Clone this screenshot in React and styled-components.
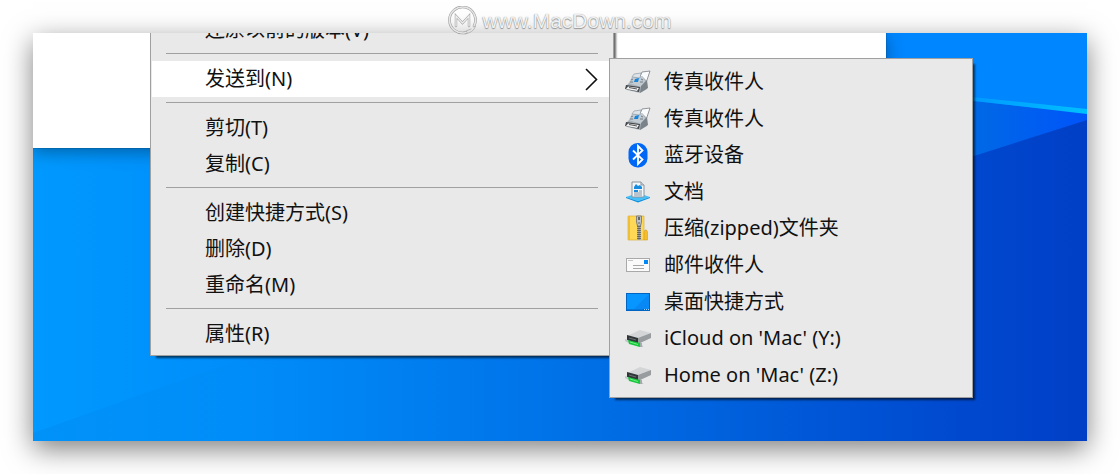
import React from 'react';
import styled, { createGlobalStyle } from 'styled-components';

const GlobalStyle = createGlobalStyle`
  * {
    box-sizing: border-box;
  }

  body {
    margin: 0;
    background: #fff;
    font-family: "Noto Sans", "Noto Sans CJK SC", sans-serif;
  }
`;

const Page = styled.div`
  display: flex;
  flex-direction: column;
  min-height: 100vh;
  padding: 0 33px 33px;
`;

const Watermark = styled.header`
  position: relative;
  z-index: 2;
  display: flex;
  justify-content: center;
  align-items: center;
  gap: 5px;
  height: 33px;
  padding-top: 8px;
`;

const WatermarkText = styled.span`
  font: 21px/28px "Liberation Sans", Arial, sans-serif;
  color: #f0f0f0;
  text-shadow: 0 0 1px #888, 0 1px 1px #999;
`;

const Frame = styled.div`
  display: flex;
  flex: 1;
  flex-direction: column;
  box-shadow: 0 8px 26px rgba(0, 0, 0, 0.5);
`;

const Desktop = styled.main`
  position: relative;
  flex: 1;
  overflow: hidden;
  background: #0078ea;
`;

const Wallpaper = styled.svg`
  position: absolute;
  width: 100%;
  height: 100%;
`;

const ExplorerWindow = styled.div`
  position: relative;
  height: 115px;
  margin-right: 201px;
  background: #fff;
  box-shadow: 0 0 1px rgba(0, 0, 0, 0.6), 0 4px 16px rgba(0, 0, 0, 0.35);
`;

const Menu = styled.div`
  position: absolute;
  top: ${({ $top }) => $top}px;
  left: ${({ $left }) => $left}px;
  width: ${({ $width }) => $width}px;
  min-height: ${({ $minHeight }) => $minHeight || 0}px;
  display: grid;
  padding: 3px 1px;
  border: 1px solid #a0a0a0;
  background: #e9e9e9;
  box-shadow: 4px 4px 2px -2px rgba(0, 0, 0, 0.6);
`;

const SubMenu = styled(Menu)`
  grid-auto-rows: 1fr;
  padding: 5px 1px 4px;
`;

const Item = styled.button`
  display: flex;
  align-items: center;
  min-height: 36px;
  padding: 0 14px 0 ${({ $icon }) => ($icon ? 14 : 53)}px;
  border: 0;
  background: ${({ $active }) => ($active ? '#fff' : 'transparent')};
  color: #111;
  font-family: inherit;
  font-size: 20px;
  line-height: 30px;
  text-align: left;
  white-space: nowrap;
`;

const Label = styled.span`
  flex: 1;
`;

const IconSlot = styled.span`
  display: flex;
  width: 26px;
  margin-right: 13px;
`;

const Separator = styled.hr`
  width: auto;
  height: 1px;
  margin: 5px 14px 7px;
  border: 0;
  background: #a0a0a0;
`;

const Logo = () => (
  <svg width="29" height="29" viewBox="0 0 29 29" fill="none" strokeLinecap="round">
    <path d="M18 26.500A13 13 0 1 1 26 20" stroke="#999" strokeWidth="2.6" />
    <path d="M18 26.500A13 13 0 1 1 26 20" stroke="#e6e6e6" strokeWidth="1.6" />
    <path d="M8 20V10L14.500 17L21 10V20" stroke="#999" strokeWidth="2.4" />
    <path d="M8 20V10L14.500 17L21 10V20" stroke="#ededed" strokeWidth="1.4" />
    <path d="M17 28C22 27 26 25 27.500 20M18 25L23 23" stroke="#aaa" strokeWidth=".8" />
  </svg>
);

const Chevron = () => (
  <svg width="14" height="24" viewBox="0 0 14 24" fill="none">
    <path d="M2 2L12.500 12.500L2 23" stroke="#111" strokeWidth="1.6" />
  </svg>
);

const FaxIcon = () => (
  <svg width="26" height="24" viewBox="0 0 26 24">
    <path d="M14 9L17 2L25 1L21 13Z" fill="#fafbfc" stroke="#777e85" strokeWidth=".8" />
    <path d="M4 13L7 7L17 6L22 11L22 19L15 23L2 20L1 16Z" fill="#a9b1b8" />
    <path d="M4 13L7 7L17 6L20 11L16 17Z" fill="#c3cbd2" />
    <path d="M16 16L22 10L23 18L15 23Z" fill="#7b838a" />
    <path d="M7 7L9 4L16 3L15 8Z" fill="#dce3e9" stroke="#87909a" strokeWidth=".6" />
    <path d="M10 9L14 8L13 12L9 12Z" fill="#1684d8" />
    <path d="M6 10L8 9M5 12L8 12M16 9L18 10M15 12L18 12" stroke="#6f7c88" />
    <path d="M1 15L15 17L14 22L0 19Z" fill="#43484d" />
    <path d="M3 16.500L14 18L12 21L1 19Z" fill="#f1f2f3" />
    <path d="M4 17.500L12 19" stroke="#555" />
  </svg>
);

const BluetoothIcon = () => (
  <svg width="26" height="26" viewBox="0 0 26 26">
    <rect x="3.500" y="1" width="19" height="24.500" rx="9" fill="#0068f5" />
    <path
      d="M8 8.500L17.500 17.500L13 22V4L17.500 8.500L8 17.500"
      fill="none"
      stroke="#fff"
      strokeWidth="1.8"
    />
  </svg>
);

const DocumentIcon = () => (
  <svg width="26" height="22" viewBox="0 0 26 22">
    <path d="M1 16L13 12L25 16L13 20Z" fill="#45c1fa" />
    <path d="M1 16L13 20L25 16V17L13 21.500L1 17Z" fill="#0c91df" />
    <path d="M7 1H16L19 4V16H7Z" fill="#f4f7f9" stroke="#89939b" />
    <path d="M16 1V4H19" fill="#d4dadd" stroke="#89939b" />
    <path d="M14 10H17M9 12H17M9 14H17" stroke="#7e93a3" fill="none" />
    <path d="M9 6L11 3L13 5L15 4L17 6V8H9ZM9 9H13V11H9Z" fill="#168bdf" />
  </svg>
);

const ZipIcon = () => (
  <svg width="26" height="26" viewBox="0 0 26 26">
    <path d="M3 1H19V25H3Z" fill="#ffd955" stroke="#d7a72d" strokeWidth=".6" />
    <path d="M3 1H5V25H3Z" fill="#edbd3c" />
    <path d="M19 17L20 15H21.500L22.500 17V25H19Z" fill="#f5bd2b" stroke="#d69e20" strokeWidth=".6" />
    <path d="M14 8V25" stroke="#555" strokeWidth="3.6" />
    <path d="M14 10V25" stroke="#c4c4c4" strokeWidth="3.6" strokeDasharray="1 1" />
    <path d="M14 10V25" stroke="#777" />
    <path d="M11.500 1H16.500V7L15.500 11H12.500L11.500 7Z" fill="#bfc3c5" stroke="#6b7074" strokeWidth=".8" />
    <path d="M13 2H15V5H13ZM13.500 7H14.500V9H13.500Z" fill="#666" />
  </svg>
);

const MailIcon = () => (
  <svg width="26" height="16" viewBox="0 0 26 16">
    <rect x="1.500" y="1.500" width="23" height="13" fill="#fafafa" stroke="#a9a9a9" />
    <path d="M3 3.500H8" stroke="#c4c4c4" />
    <path d="M8 8.500H19M8 11.500H19" stroke="#a6a6a6" />
    <rect x="19" y="3" width="4" height="4" fill="#0086f5" />
  </svg>
);

const ScreenIcon = () => (
  <svg width="26" height="18" viewBox="0 0 26 18">
    <rect x="1" y="0" width="24" height="18" fill="#0065c2" />
    <path d="M2 1H24V16H2Z" fill="#0795ff" />
    <path d="M24 1V16H9Z" fill="#0888f4" />
    <path d="M2 16.500H18" stroke="#0878d8" />
    <path d="M19 16.500H24" stroke="#9ad4ff" strokeDasharray="1 1" />
  </svg>
);

const DriveIcon = () => (
  <svg width="26" height="18" viewBox="0 0 26 18">
    <path d="M2 7L15 1L26 4L13 10Z" fill="#d3d5d7" />
    <path d="M13 9L26 4V9L13 15Z" fill="#989c9f" />
    <path d="M2 6L13 9V15L2 11Z" fill="#303538" />
    <path d="M4 9L11 11" stroke="#697074" />
    <path d="M0 11L4 13M12 16L18 18" stroke="#c1c6c8" strokeWidth="2" />
    <path d="M3 11L15 14V18L4 15Z" fill="#16c63d" />
    <path d="M5 13L13 15.500" stroke="#73ed84" />
    <path d="M16 14V18" stroke="#a5aaad" strokeWidth="2" />
  </svg>
);

const menuGroups = [
  ['还原以前的版本(V)'],
  ['发送到(N)'],
  ['剪切(T)', '复制(C)'],
  ['创建快捷方式(S)', '删除(D)', '重命名(M)'],
  ['属性(R)'],
];

const targets = [
  { id: 1, label: '传真收件人', Icon: FaxIcon },
  { id: 2, label: '传真收件人', Icon: FaxIcon },
  { id: 3, label: '蓝牙设备', Icon: BluetoothIcon },
  { id: 4, label: '文档', Icon: DocumentIcon },
  { id: 5, label: '压缩(zipped)文件夹', Icon: ZipIcon },
  { id: 6, label: '邮件收件人', Icon: MailIcon },
  { id: 7, label: '桌面快捷方式', Icon: ScreenIcon },
  { id: 8, label: "iCloud on 'Mac' (Y:)", Icon: DriveIcon },
  { id: 9, label: "Home on 'Mac' (Z:)", Icon: DriveIcon },
];

const Background = () => (
  <Wallpaper viewBox="0 0 1054 408" preserveAspectRatio="none" aria-hidden="true">
    <defs>
      <linearGradient id="base" x1="0" x2="1" y1="0" y2="0">
        <stop offset="0" stopColor="#0099ff" />
        <stop offset=".2" stopColor="#008dfa" />
        <stop offset=".5" stopColor="#0072e8" />
        <stop offset=".75" stopColor="#0056d6" />
        <stop offset=".88" stopColor="#0049cf" />
        <stop offset="1" stopColor="#003fc6" />
      </linearGradient>
      <linearGradient id="beam" x1="0" x2="1" y1="0" y2="0">
        <stop offset="0" stopColor="#008cff" />
        <stop offset="1" stopColor="#00c0ff" />
      </linearGradient>
      <linearGradient id="fold" x1="0" x2="1" y1="0" y2="0">
        <stop offset=".3" stopColor="#0068e6" />
        <stop offset="1" stopColor="#0054fa" />
      </linearGradient>
      <linearGradient id="corner" x1="0" x2="1" y1="0" y2="0">
        <stop offset="0" stopColor="#0080e8" stopOpacity=".3" />
        <stop offset="1" stopColor="#0080e8" stopOpacity="0" />
      </linearGradient>
    </defs>
    <path d="M0 0H1054V408H0Z" fill="url(#base)" />
    <path d="M0 400L260 308V408H0Z" fill="url(#corner)" />
    <path d="M840 0H1054V80L840 62Z" fill="#0086ff" />
    <path d="M900 64L1054 80V87L900 136Z" fill="url(#fold)" />
    <path d="M900 60L1054 76V81L900 63Z" fill="url(#beam)" />
  </Wallpaper>
);

const App = () => (
  <Page>
    <GlobalStyle />
    <Watermark>
      <Logo />
      <WatermarkText>www.MacDown.com</WatermarkText>
    </Watermark>
    <Frame>
      <Desktop>
        <Background />
        <ExplorerWindow />
        <Menu role="menu" $top={-25} $left={117} $width={464}>
          {menuGroups.map((group, index) => (
            <React.Fragment key={group[0]}>
              {index > 0 && <Separator />}
              {group.map((label) => (
                <Item key={label} role="menuitem" $active={index === 1}>
                  <Label>{label}</Label>
                  {index === 1 && <Chevron />}
                </Item>
              ))}
            </React.Fragment>
          ))}
        </Menu>
        <SubMenu role="menu" $top={25} $left={576} $width={364} $minHeight={340}>
          {targets.map(({ id, label, Icon }) => (
            <Item key={id} role="menuitem" $icon>
              <IconSlot><Icon /></IconSlot>
              <Label>{label}</Label>
            </Item>
          ))}
        </SubMenu>
      </Desktop>
    </Frame>
  </Page>
);

export default App;
